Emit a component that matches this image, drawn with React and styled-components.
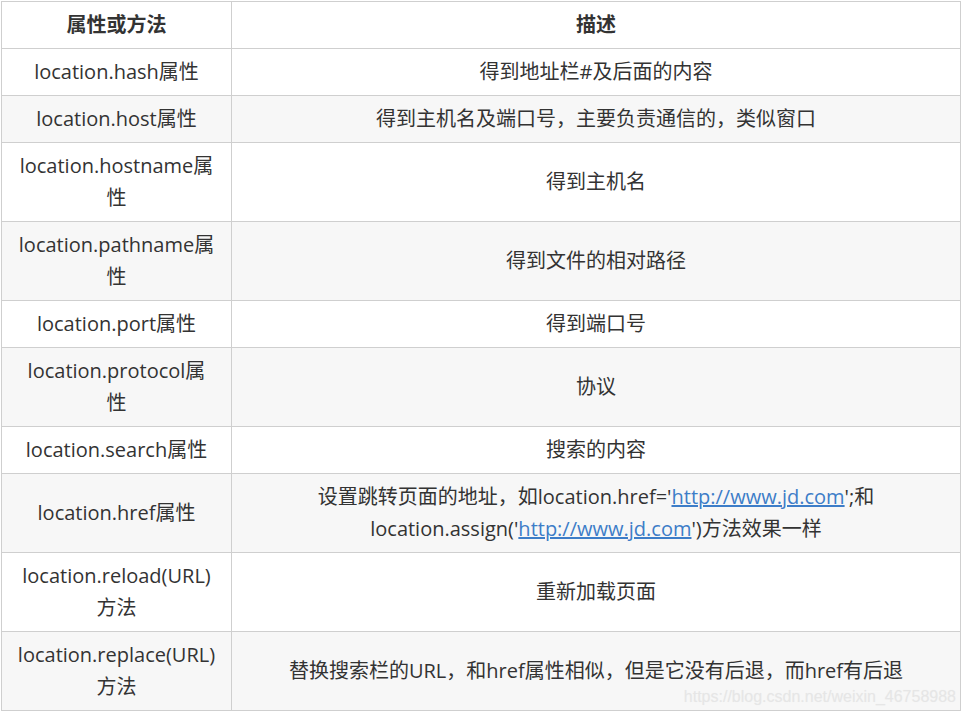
import styled, { createGlobalStyle } from "styled-components";

const GlobalStyle = createGlobalStyle`
  body {
    margin: 0;
    padding: 1px;
    background: #fff;
    font-family: "Open Sans", "Noto Sans CJK SC", sans-serif;
  }
`;

const Wrap = styled.div`
  position: relative;
  width: 960px;
`;

const Table = styled.table`
  width: 960px;
  border-collapse: collapse;
  table-layout: fixed;
  font-size: 20px;
  color: #333;
`;

const Row = styled.tr`
  background: ${(p) => (p.$striped ? "#f7f7f7" : "#fff")};
`;

const Head = styled.th`
  height: 46px;
  border: 1px solid #cfcfcf;
  padding: 0 6px;
  font-weight: 700;
  text-align: center;
  line-height: 32px;
`;

const Cell = styled.td`
  border: 1px solid #cfcfcf;
  padding: 7px 6px;
  text-align: center;
  vertical-align: middle;
  line-height: 32px;
  white-space: nowrap;
`;

const DescCell = styled(Cell)`
  white-space: normal;
`;

const Link = styled.a`
  color: #3d7dc8;
  text-decoration: underline;
`;

const Watermark = styled.div`
  position: absolute;
  right: 5px;
  bottom: 5px;
  font-family: "Liberation Sans", Arial, sans-serif;
  font-size: 16px;
  color: #e6e6e6;
  text-shadow: 0 0 1px #f0f0f0;
  pointer-events: none;
`;

const rows = [
  { name: "location.hash属性", desc: "得到地址栏#及后面的内容" },
  { name: "location.host属性", desc: "得到主机名及端口号，主要负责通信的，类似窗口" },
  { name: ["location.hostname属", "性"], desc: "得到主机名" },
  { name: ["location.pathname属", "性"], desc: "得到文件的相对路径" },
  { name: "location.port属性", desc: "得到端口号" },
  { name: ["location.protocol属", "性"], desc: "协议" },
  { name: "location.search属性", desc: "搜索的内容" },
  {
    name: "location.href属性",
    desc: (
      <>
        设置跳转页面的地址，如location.href='<Link href="#">http://www.jd.com</Link>';和
        <br />
        location.assign('<Link href="#">http://www.jd.com</Link>')方法效果一样
      </>
    ),
  },
  { name: ["location.reload(URL)", "方法"], desc: "重新加载页面" },
  {
    name: ["location.replace(URL)", "方法"],
    desc: "替换搜索栏的URL，和href属性相似，但是它没有后退，而href有后退",
  },
];

const App = () => {
  return (
    <>
      <GlobalStyle />
      <Wrap>
        <Table>
          <colgroup>
            <col style={{ width: 230 }} />
            <col />
          </colgroup>
          <thead>
            <Row>
              <Head>属性或方法</Head>
              <Head>描述</Head>
            </Row>
          </thead>
          <tbody>
            {rows.map((r, i) => (
              <Row key={i} $striped={i % 2 === 1}>
                <Cell>
                  {Array.isArray(r.name) ? (
                    <>
                      {r.name[0]}
                      <br />
                      {r.name[1]}
                    </>
                  ) : (
                    r.name
                  )}
                </Cell>
                <DescCell>{r.desc}</DescCell>
              </Row>
            ))}
          </tbody>
        </Table>
        <Watermark>https://blog.csdn.net/weixin_46758988</Watermark>
      </Wrap>
    </>
  );
};

export default App;
